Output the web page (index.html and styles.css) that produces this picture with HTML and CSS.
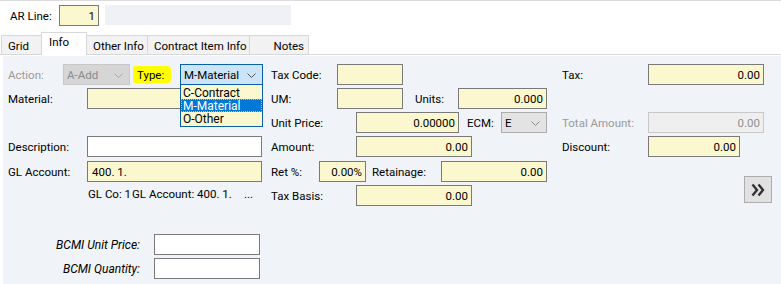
FILE: index.html
```html
<!DOCTYPE html>
<html>

<head>
    <meta charset="UTF-8">
    <title>AR Line - Info</title>
    <link rel="stylesheet" href="styles.css">
</head>

<body>
    <div class="topbar">
        <span class="lbl ar-lbl">AR Line:</span>
        <span class="fld yellow num ar-box">1</span>
        <span class="ar-desc"></span>
    </div>

    <div class="tabs">
        <span class="tab t-grid">Grid</span>
        <span class="tab active t-info">Info</span>
        <span class="tab t-other">Other Info</span>
        <span class="tab t-contract">Contract Item Info</span>
        <span class="tab t-notes">Notes</span>
    </div>

    <div class="panel">
        <div class="cols">
            <!-- left column -->
            <div class="col col-left">
                <div class="row">
                    <span class="lbl muted w55">Action:</span>
                    <span class="sel sel-disabled w67">A-Add
                        <svg class="chev" width="9" height="5" viewBox="0 0 9 5"><polyline points="0.5,0.5 4.5,4.5 8.5,0.5" /></svg>
                    </span>
                    <span class="lbl hilite">Type:</span>
                    <span class="sel sel-open w83">M-Material
                        <svg class="chev" width="9" height="5" viewBox="0 0 9 5"><polyline points="0.5,0.5 4.5,4.5 8.5,0.5" /></svg>
                        <span class="droplist">
                            <span class="opt">C-Contract</span>
                            <span class="opt picked">M-Material</span>
                            <span class="opt">O-Other</span>
                        </span>
                    </span>
                </div>
                <div class="row">
                    <span class="lbl w79">Material:</span>
                    <span class="fld yellow w176"></span>
                </div>
                <div class="row"></div>
                <div class="row">
                    <span class="lbl w79">Description:</span>
                    <span class="fld white w175"></span>
                </div>
                <div class="row row-gap">
                    <span class="lbl w79">GL Account:</span>
                    <span class="fld yellow w175 txt">400. 1.</span>
                </div>
                <div class="row glinfo">
                    <span class="gl-co">GL Co: 1</span>
                    <span class="gl-acct">GL Account:</span>
                    <span class="gl-val">400. 1.</span>
                    <span class="gl-more">...</span>
                </div>
            </div>

            <!-- middle column -->
            <div class="col col-mid">
                <div class="row">
                    <span class="lbl w66">Tax Code:</span>
                    <span class="fld yellow w66"></span>
                </div>
                <div class="row">
                    <span class="lbl w66">UM:</span>
                    <span class="fld yellow w66"></span>
                    <span class="lbl w43 ml12">Units:</span>
                    <span class="fld yellow num w89">0.000</span>
                </div>
                <div class="row">
                    <span class="lbl w85">Unit Price:</span>
                    <span class="fld yellow num w103">0.00000</span>
                    <span class="lbl w34 ml8">ECM:</span>
                    <span class="sel sel-gray w46">E
                        <svg class="chev" width="9" height="5" viewBox="0 0 9 5"><polyline points="0.5,0.5 4.5,4.5 8.5,0.5" /></svg>
                    </span>
                </div>
                <div class="row">
                    <span class="lbl w85">Amount:</span>
                    <span class="fld yellow num w116">0.00</span>
                </div>
                <div class="row row-gap">
                    <span class="lbl w48">Ret %:</span>
                    <span class="fld yellow num w47">0.00%</span>
                    <span class="lbl w69 ml6">Retainage:</span>
                    <span class="fld yellow num w106">0.00</span>
                </div>
                <div class="row">
                    <span class="lbl w85">Tax Basis:</span>
                    <span class="fld yellow num w116">0.00</span>
                </div>
            </div>

            <!-- right column -->
            <div class="col col-right">
                <div class="row">
                    <span class="lbl w86">Tax:</span>
                    <span class="fld yellow num w116">0.00</span>
                </div>
                <div class="row"></div>
                <div class="row">
                    <span class="lbl muted w86">Total Amount:</span>
                    <span class="fld disabled num w116">0.00</span>
                </div>
                <div class="row">
                    <span class="lbl w86">Discount:</span>
                    <span class="fld yellow num w92">0.00</span>
                </div>
                <button class="more-btn">
                    <svg width="14" height="14" viewBox="0 0 14 14">
                        <polyline points="1.5,1.5 6,7 1.5,12.5" />
                        <polyline points="7.5,1.5 12,7 7.5,12.5" />
                    </svg>
                </button>
            </div>
        </div>

        <div class="bcmi">
            <div class="row">
                <span class="lbl bcmi-lbl">BCMI Unit Price:</span>
                <span class="fld white w106"></span>
            </div>
            <div class="row">
                <span class="lbl bcmi-lbl">BCMI Quantity:</span>
                <span class="fld white w106"></span>
            </div>
        </div>
    </div>
</body>

</html>
```

FILE: styles.css
```css
body {
    margin: 0;
    width: 781px;
    height: 284px;
    overflow: hidden;
    font-family: Roboto, Arial, sans-serif;
    font-size: 11.5px;
    color: #000;
    background: white;
    border-top: 1px solid #dcdcdc;
    box-sizing: border-box;
}

/* top strip */
.topbar {
    display: flex;
    align-items: flex-start;
    height: 32px;
    padding: 4px 0 0 10px;
    box-sizing: border-box;
}

.ar-lbl {
    width: 49px;
}

.ar-box {
    width: 40px;
    border-color: #6e6e6e;
}

.ar-desc {
    width: 186px;
    height: 20px;
    margin-left: 6px;
    background: #eef1f5;
}

/* tabs */
.tabs {
    display: flex;
    align-items: flex-end;
    height: 21px;
    padding-left: 1px;
    border-bottom: 1px solid #d8d8d8;
}

.tab {
    height: 19px;
    line-height: 20px;
    padding-left: 6px;
    box-sizing: border-box;
    background: #f2f2f2;
    border: 1px solid #d8d8d8;
    border-bottom: none;
    margin-right: -1px;
    white-space: nowrap;
}

.tab.active {
    height: 23px;
    line-height: 18px;
    margin-bottom: -1px;
    background: white;
    position: relative;
    z-index: 1;
    padding-left: 7px;
}

.t-grid { width: 41px; }
.t-info { width: 46px; }
.t-other { width: 62px; }
.t-contract { width: 103px; }
.t-notes {
    width: 60px;
    text-align: right;
    padding-right: 4px;
}

/* form panel */
.panel {
    margin: 1px 0 0 3px;
    height: 228px;
    background: #f0f3f7;
    padding: 8px 0 0 5px;
    box-sizing: border-box;
}

.cols {
    display: flex;
}

.col-left { width: 263px; }
.col-mid { width: 291px; }
.col-right { flex: 1; }

.row {
    display: flex;
    align-items: flex-start;
    height: 24px;
    white-space: nowrap;
}

.row-gap {
    margin-top: 1px;
}

.lbl {
    line-height: 23px;
    white-space: nowrap;
    flex: none;
}

.muted {
    color: #9a9a9a;
}

.hilite {
    width: 38px;
    height: 17px;
    line-height: 19px;
    margin: 2px 9px 0 3px;
    padding-left: 4px;
    box-sizing: border-box;
    background: #ffff00;
    border-radius: 2px 4px 3px 2px;
}

/* fields */
.fld {
    height: 21px;
    line-height: 20px;
    box-sizing: border-box;
    border: 1px solid #7a7a7a;
    padding: 0 3px;
    white-space: nowrap;
    flex: none;
}

.yellow { background: #fbf8d0; }
.white { background: white; }

.disabled {
    background: #efefef;
    border-color: #c8c8c8;
    color: #8f8f8f;
}

.num { text-align: right; }
.txt { padding-left: 4px; }

.sel {
    position: relative;
    height: 21px;
    line-height: 20px;
    box-sizing: border-box;
    padding-left: 3px;
    border: 1px solid #adadad;
    flex: none;
}

.chev {
    position: absolute;
    right: 6px;
    top: 8px;
    fill: none;
    stroke: #555;
    stroke-width: 1;
}

.sel-disabled {
    background: #d6d6d6;
    border-color: #c8c8c8;
    color: #8a8a8a;
}

.sel-disabled .chev { stroke: #a8a8a8; }

.sel-gray {
    background: #e3e3e3;
    border-color: #adadad;
}

.sel-gray .chev { stroke: #8a8a8a; }

.sel-open {
    background: #cce4f7;
    border-color: #0a5fa8;
}

/* open combo list */
.droplist {
    position: absolute;
    left: -1px;
    top: 19px;
    width: 83px;
    box-sizing: border-box;
    border: 1px solid #0a5fa8;
    background: #fbf8d0;
    z-index: 5;
    display: flex;
    flex-direction: column;
    padding: 1px 0;
    font-size: 12px;
}

.opt {
    height: 13px;
    line-height: 14px;
    padding-left: 2px;
}

.opt.picked {
    background: #0078d7;
    color: white;
    outline: 1px dotted #9cc7ef;
    outline-offset: -1px;
}

/* widths */
.w34 { width: 34px; }
.w43 { width: 43px; }
.w46 { width: 46px; }
.w47 { width: 47px; }
.w48 { width: 48px; }
.w55 { width: 55px; }
.w66 { width: 66px; }
.w67 { width: 67px; }
.w69 { width: 69px; }
.w79 { width: 79px; }
.w83 { width: 83px; }
.w85 { width: 85px; }
.w86 { width: 86px; }
.w89 { width: 89px; }
.w92 { width: 92px; }
.w103 { width: 103px; }
.w106 { width: 106px; }
.w116 { width: 116px; }
.w175 { width: 175px; }
.w176 { width: 176px; }

.ml6 { margin-left: 6px; }
.ml8 { margin-left: 8px; }
.ml12 { margin-left: 12px; }

.glinfo {
    padding-left: 80px;
    line-height: 19px;
}

.gl-co { width: 44px; }
.gl-acct { width: 65px; }
.gl-val { width: 47px; }

.more-btn {
    display: block;
    margin: 16px 0 0 182px;
    width: 28px;
    height: 27px;
    padding: 0;
    background: #e1e1e1;
    border: 1px solid #adadad;
}

.more-btn svg {
    display: block;
    margin: 0 auto;
    fill: none;
    stroke: #333;
    stroke-width: 2.4;
}

/* BCMI rows */
.bcmi {
    margin-top: 25px;
}

.bcmi-lbl {
    width: 146px;
    padding-right: 14px;
    box-sizing: border-box;
    text-align: right;
    font-style: italic;
    font-size: 12px;
}
```
